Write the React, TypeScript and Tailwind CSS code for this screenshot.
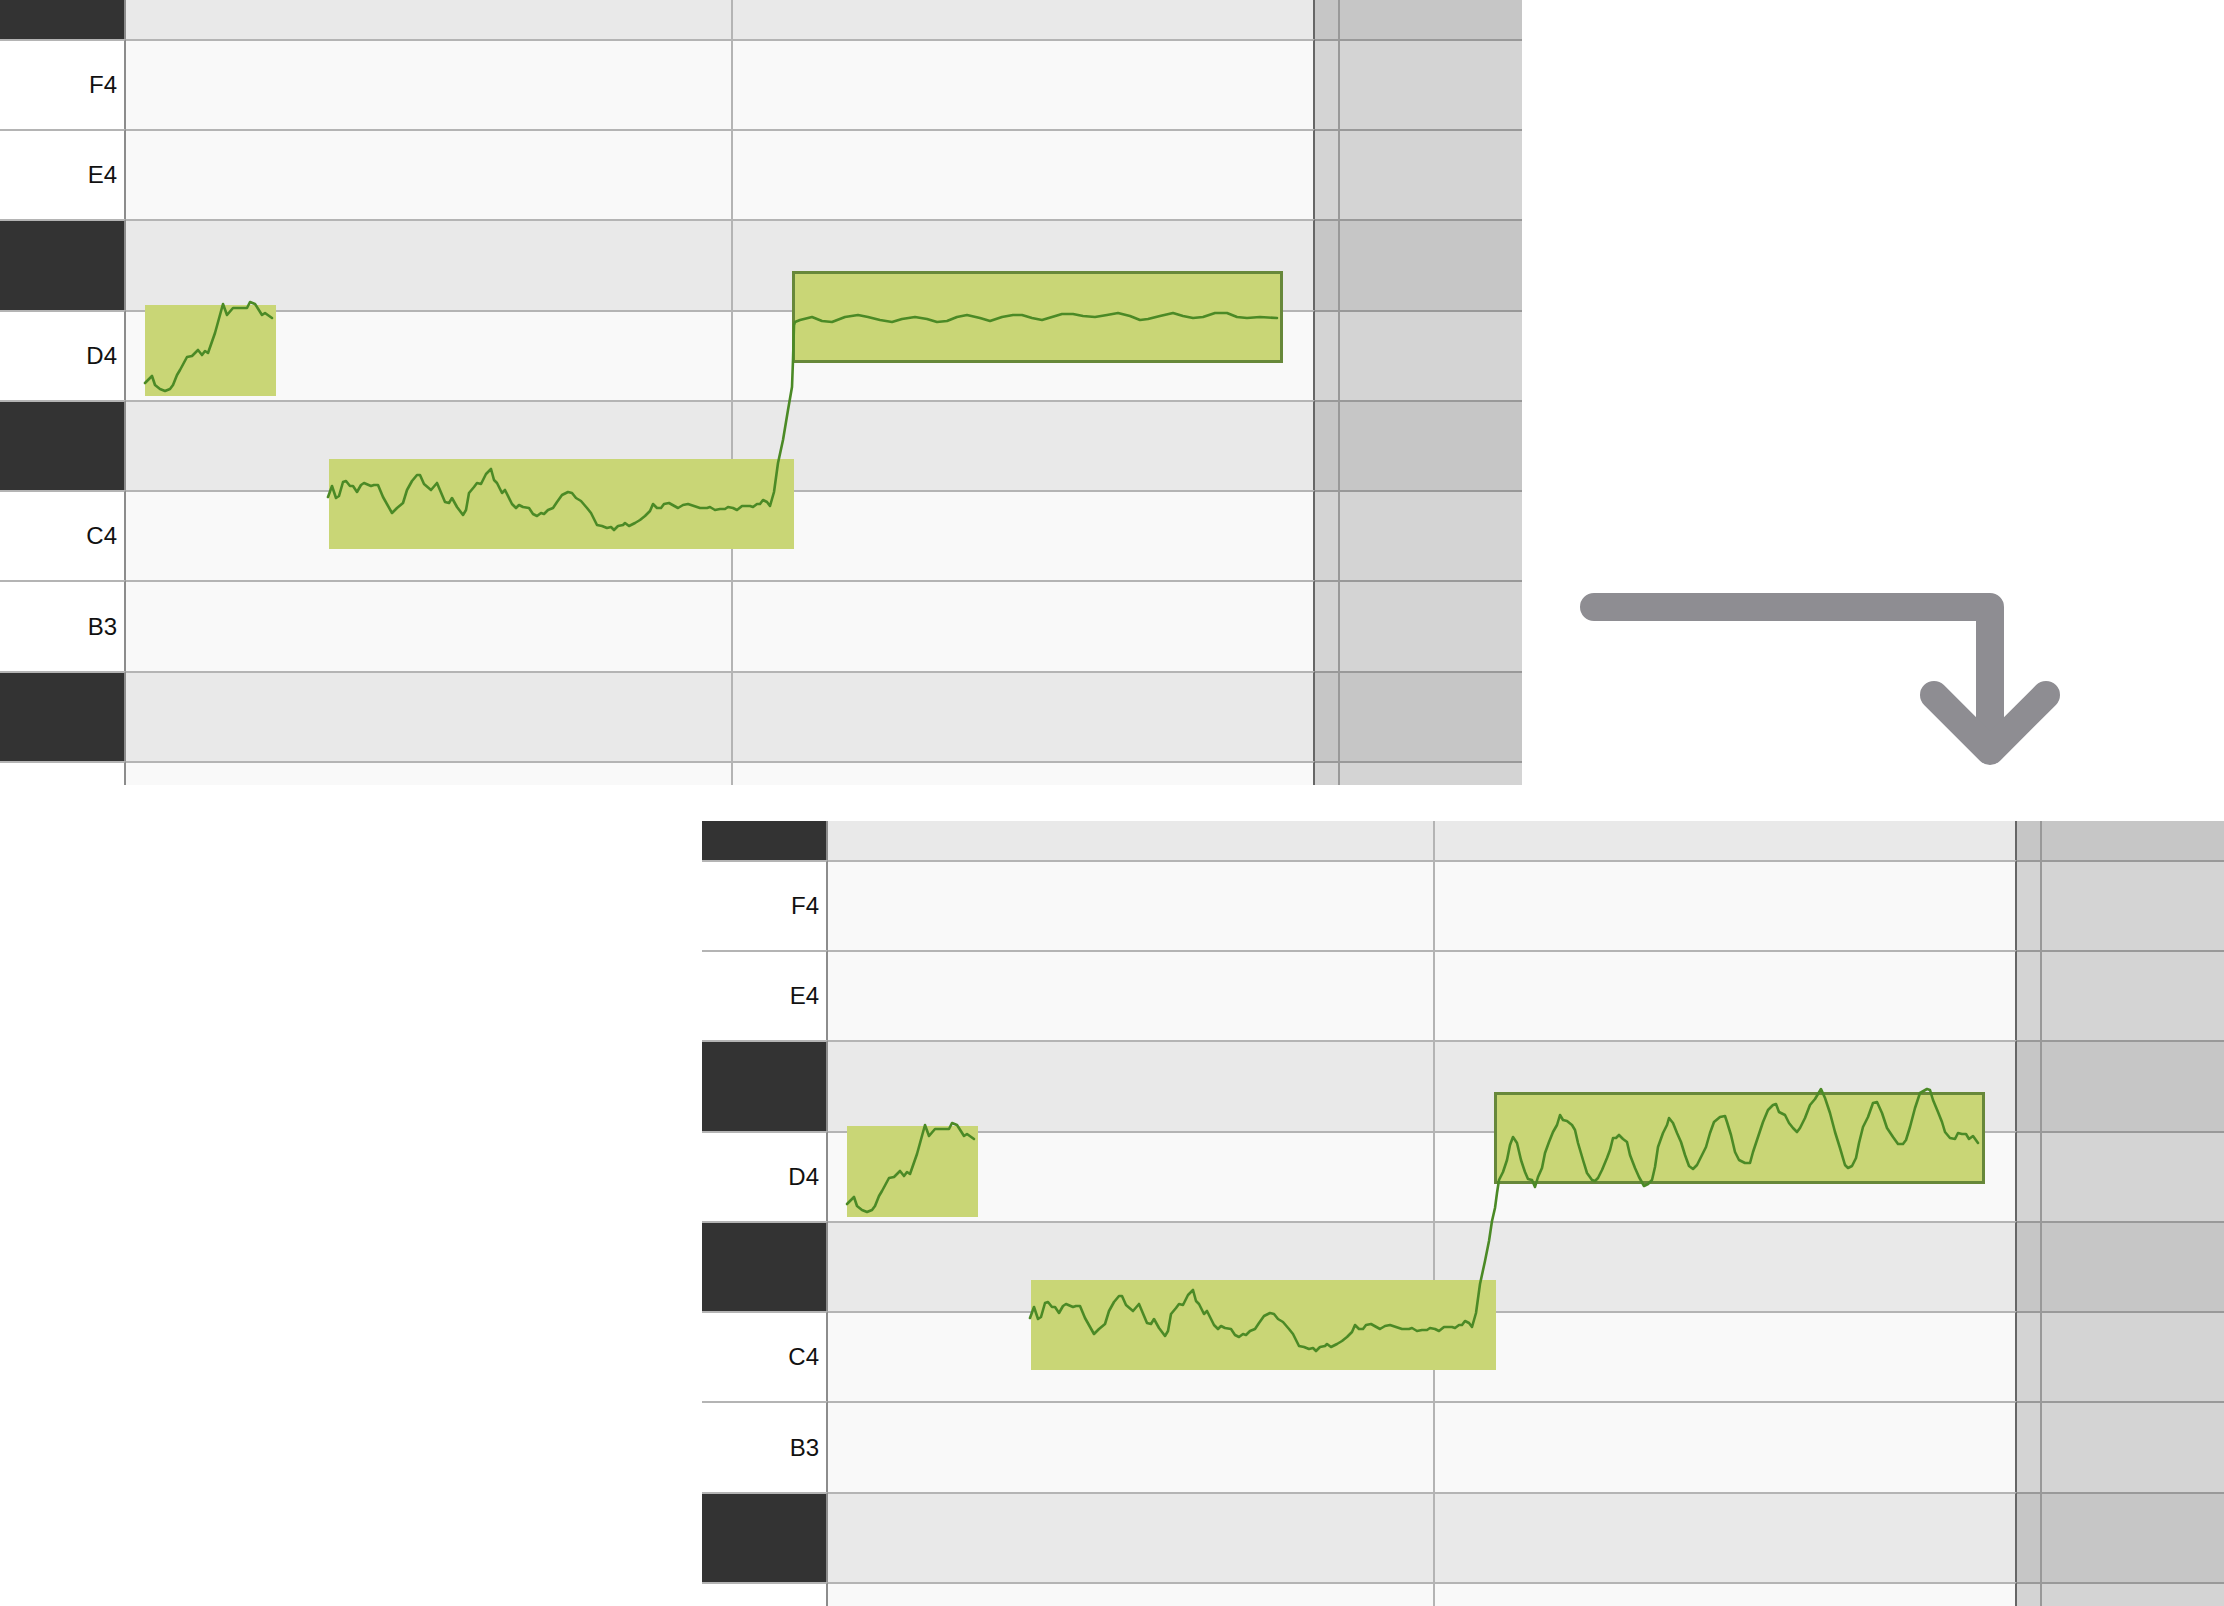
import React from "react";

type Row = { black?: boolean; label?: string; h: number; first?: boolean };

const ROWS: Row[] = [
  { black: true, h: 39, first: true },
  { label: "F4", h: 90 },
  { label: "E4", h: 90 },
  { black: true, h: 91 },
  { label: "D4", h: 90 },
  { black: true, h: 90 },
  { label: "C4", h: 90 },
  { label: "B3", h: 91 },
  { black: true, h: 90 },
  { label: "", h: 24 },
];

const N1 =
  "145,383 152,376 155,385 160,389 165,391 170,389 173,385 177,375 180,370 187,357 192,356 198,350 202,355 205,351 208,353 215,333 223,304 227,315 233,308 247,308 250,302 255,304 262,315 265,313 272,318";

const N2 =
  "328,497 332,486 336,498 339,496 343,482 346,481 350,486 353,486 357,492 361,485 364,483 371,486 374,485 378,485 383,497 392,513 397,508 403,503 407,490 412,481 417,475 420,475 424,484 431,490 437,483 445,502 449,503 452,498 457,507 463,515 466,510 469,493 474,487 477,483 481,484 486,474 491,469 494,480 497,483 502,493 505,490 512,504 516,508 519,505 523,507 529,508 533,514 537,516 541,513 544,514 548,510 553,508 557,502 562,495 568,492 572,493 576,498 581,501 587,508 591,513 597,525 602,526 607,528 611,527 614,530 618,526 623,525 625,523 629,526 635,523 640,520 645,516 650,511 653,504 657,508 661,508 664,504 669,503 678,508 683,505 688,504 700,508 707,508 710,507 715,510 720,509 725,509 728,507 733,508 737,510 742,506 750,506 753,507 757,504 760,504 763,500 767,502 770,506 774,492 778,463 783,440";

const TOP_TAIL =
  " 788,410 792,387 793,360 794,325 795,322 800,320 812,317 822,321 832,322 845,317 858,315 868,317 880,320 892,322 902,319 915,317 927,319 937,322 947,321 957,317 967,315 980,318 990,321 1002,317 1013,315 1022,315 1032,318 1042,320 1052,317 1062,314 1073,314 1083,316 1095,317 1107,315 1118,313 1130,316 1140,320 1148,319 1160,316 1173,313 1183,316 1193,318 1203,317 1215,313 1227,313 1237,317 1247,318 1260,317 1277,318";

const BOTTOM_TAIL =
  " 787,420 790,400 793,387 795,372 797,359 801,351 805,339 808,324 811,316 815,322 819,339 823,351 826,358 830,359 833,366 836,356 840,347 843,332 847,321 851,311 855,304 858,294 861,299 865,300 870,304 873,309 876,322 881,339 885,352 890,359 893,360 896,357 900,349 905,337 908,329 911,317 914,317 917,314 921,318 925,321 928,334 933,347 937,356 942,365 946,363 950,359 953,346 956,326 961,312 965,304 967,297 971,302 975,312 979,321 983,334 987,345 991,348 995,344 1000,334 1004,326 1008,312 1012,301 1018,296 1023,295 1025,301 1029,314 1033,331 1037,339 1043,342 1048,342 1051,331 1056,316 1061,301 1066,289 1071,284 1074,283 1077,291 1083,294 1087,302 1091,307 1095,311 1098,307 1103,297 1108,284 1113,278 1119,268 1123,277 1128,292 1133,311 1138,327 1143,344 1146,347 1150,345 1154,337 1157,322 1161,306 1166,296 1171,282 1175,281 1180,292 1185,307 1191,316 1196,323 1201,323 1204,319 1208,306 1213,287 1218,272 1225,268 1228,269 1231,279 1236,291 1240,301 1243,311 1248,317 1253,318 1256,312 1260,313 1264,313 1267,318 1271,315 1276,322";

function PianoRow({ r }: { r: Row }) {
  const topLight = r.first ? "" : "border-t-2 border-t-[#b4b4b4]";
  const topDark = r.first ? "" : "border-t-2 border-t-[#999999]";
  const cellBg = r.black ? "bg-[#e9e9e9]" : "bg-[#f9f9f9]";
  const shadeBg = r.black ? "bg-[#c6c6c6]" : "bg-[#d4d4d4]";
  return (
    <div className="flex" style={{ height: r.h }}>
      <div
        className={`w-[126px] shrink-0 border-r-2 border-r-[#8c8c8c] ${topLight} flex items-center justify-end pr-[7px] ${
          r.black ? "bg-[#333333]" : "bg-white"
        }`}
      >
        {r.label ? (
          <span className="text-[24px] leading-none text-[#111111] font-['Liberation_Sans',Arial,sans-serif]">
            {r.label}
          </span>
        ) : null}
      </div>
      <div className={`w-[607px] shrink-0 border-r-2 border-r-[#b4b4b4] ${topLight} ${cellBg}`} />
      <div className={`w-[582px] shrink-0 border-r-2 border-r-[#666666] ${topLight} ${cellBg}`} />
      <div className={`w-[25px] shrink-0 border-r-2 border-r-[#999999] ${topDark} ${shadeBg}`} />
      <div className={`flex-1 ${topDark} ${shadeBg}`} />
    </div>
  );
}

function Panel({ after }: { after?: boolean }) {
  return (
    <div className="relative w-[1522px] h-[785px] overflow-hidden bg-white shrink-0">
      <div className="flex flex-col">
        {ROWS.map((r, i) => (
          <PianoRow key={i} r={r} />
        ))}
      </div>

      {/* notes on the piano-roll canvas */}
      <div className="absolute left-[145px] top-[305px] w-[131px] h-[91px] bg-[#c9d676]" />
      <div className="absolute left-[329px] top-[459px] w-[465px] h-[90px] bg-[#c9d676]" />
      <div className="absolute left-[792px] top-[271px] w-[491px] h-[92px] bg-[#c9d676] border-[3px] border-[#67883a]" />

      {/* pitch curves */}
      <svg
        className="absolute left-0 top-0 pointer-events-none"
        width={1522}
        height={785}
        viewBox="0 0 1522 785"
      >
        <polyline
          points={N1}
          fill="none"
          stroke="#4b8a26"
          strokeWidth={2.6}
          strokeLinejoin="round"
          strokeLinecap="round"
        />
        <polyline
          points={N2 + (after ? BOTTOM_TAIL : TOP_TAIL)}
          fill="none"
          stroke="#4b8a26"
          strokeWidth={2.6}
          strokeLinejoin="round"
          strokeLinecap="round"
        />
      </svg>
    </div>
  );
}

export default function App() {
  return (
    <div className="w-[2224px] h-[1606px] bg-white overflow-hidden">
      <div className="flex">
        <Panel />
        <div className="flex-1 pt-[578px]">
          <svg width={702} height={200} viewBox="1522 578 702 200">
            <polyline
              points="1594,607 1990,607 1990,750"
              fill="none"
              stroke="#8e8d92"
              strokeWidth={28}
              strokeLinejoin="round"
              strokeLinecap="round"
            />
            <polyline
              points="1934,695 1990,751 2046,695"
              fill="none"
              stroke="#8e8d92"
              strokeWidth={28}
              strokeLinejoin="round"
              strokeLinecap="round"
            />
          </svg>
        </div>
      </div>
      <div className="pl-[702px] pt-[36px]">
        <Panel after />
      </div>
    </div>
  );
}
